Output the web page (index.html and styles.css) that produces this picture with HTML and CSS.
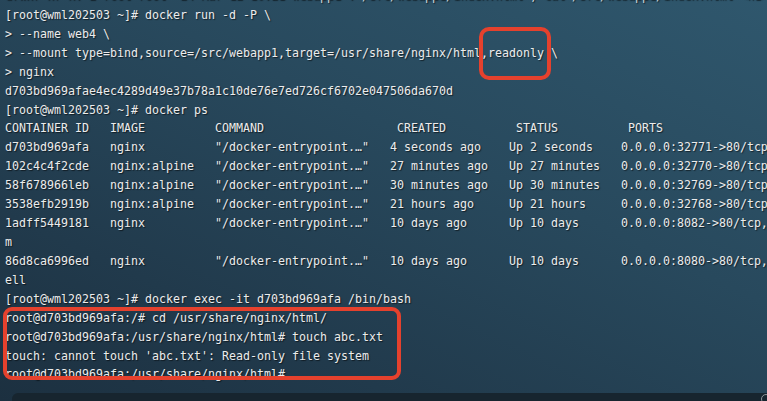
FILE: index.html
```html
<!DOCTYPE html>
<html lang="en">
<head>
<meta charset="utf-8">
<title>terminal</title>
<link rel="stylesheet" href="styles.css">
</head>
<body>
<div class="screen">
<pre class="term"><span class="ghost">drwxr-xr-x. 2 root root  24 Mar 12 10:21 webapp1 : /src/webapp1/index.html ; cat /src/webapp1/index.html &lt;h1&gt; hello webapp &lt;/h1&gt;</span>
[root@wml202503 ~]# docker run -d -P \
&gt; --name web4 \
&gt; --mount type=bind,source=/src/webapp1,target=/usr/share/nginx/html,readonly \
&gt; nginx
d703bd969afae4ec4289d49e37b78a1c10de76e7ed726cf6702e047506da670d
[root@wml202503 ~]# docker ps
CONTAINER ID   IMAGE          COMMAND                   CREATED          STATUS          PORTS
d703bd969afa   nginx          "/docker-entrypoint.…"   4 seconds ago    Up 2 seconds    0.0.0.0:32771-&gt;80/tcp, :::32771-&gt;80/tcp   web4
102c4c4f2cde   nginx:alpine   "/docker-entrypoint.…"   27 minutes ago   Up 27 minutes   0.0.0.0:32770-&gt;80/tcp, :::32770-&gt;80/tcp   web3
58f678966leb   nginx:alpine   "/docker-entrypoint.…"   30 minutes ago   Up 30 minutes   0.0.0.0:32769-&gt;80/tcp, :::32769-&gt;80/tcp   web2
3538efb2919b   nginx:alpine   "/docker-entrypoint.…"   21 hours ago     Up 21 hours     0.0.0.0:32768-&gt;80/tcp, :::32768-&gt;80/tcp   web1
1adff5449181   nginx          "/docker-entrypoint.…"   10 days ago      Up 10 days      0.0.0.0:8082-&gt;80/tcp, :::8082-&gt;80/tcp
m
86d8ca6996ed   nginx          "/docker-entrypoint.…"   10 days ago      Up 10 days      0.0.0.0:8080-&gt;80/tcp, :::8080-&gt;80/tcp
ell
[root@wml202503 ~]# docker exec -it d703bd969afa /bin/bash
root@d703bd969afa:/# cd /usr/share/nginx/html/
root@d703bd969afa:/usr/share/nginx/html# touch abc.txt
touch: cannot touch 'abc.txt': Read-only file system
root@d703bd969afa:/usr/share/nginx/html# </pre>
<div class="dock"><span class="dock-knob"></span></div>
<div class="mark mark-readonly"></div>
<div class="mark mark-shell"></div>
</div>
</body>
</html>
```

FILE: styles.css
```css
html, body {
  margin: 0;
  padding: 0;
  width: 767px;
  height: 401px;
  overflow: hidden;
}

body {
  background:
    linear-gradient(205deg, #2f576d 0%, #28495d 40%, #213a4c 75%, #1c3040 100%);
  font-family: "DejaVu Sans Mono", "Liberation Mono", monospace;
}

.screen {
  position: relative;
  height: 401px;
  display: flex;
  flex-direction: column;
}

.term {
  flex: 1;
  margin: -13px 0 0;
  padding: 0 0 0 5px;
  font-family: "DejaVu Sans Mono", "Liberation Mono", monospace;
  font-size: 11.63px;
  line-height: 18.92px;
  color: #ececec;
  white-space: pre;
  overflow: hidden;
  text-shadow: 1px 1px 1px rgba(0, 0, 0, 0.55);
}

.ghost {
  color: #cfd6da;
}

.dock {
  height: 8px;
  margin-left: 12px;
  background: #17252f;
  border-top-left-radius: 6px;
  position: relative;
}

.dock-knob {
  position: absolute;
  right: -4px;
  top: 1px;
  width: 8px;
  height: 8px;
  border-radius: 50%;
  border: 1px solid #8e969b;
}

.mark {
  position: absolute;
  border: 4px solid #e5412d;
  box-sizing: border-box;
}

.mark-readonly {
  left: 479px;
  top: 27px;
  width: 72px;
  height: 53px;
  border-radius: 10px;
}

.mark-shell {
  left: 3px;
  top: 307px;
  width: 398px;
  height: 73px;
  border-radius: 9px;
}
```
